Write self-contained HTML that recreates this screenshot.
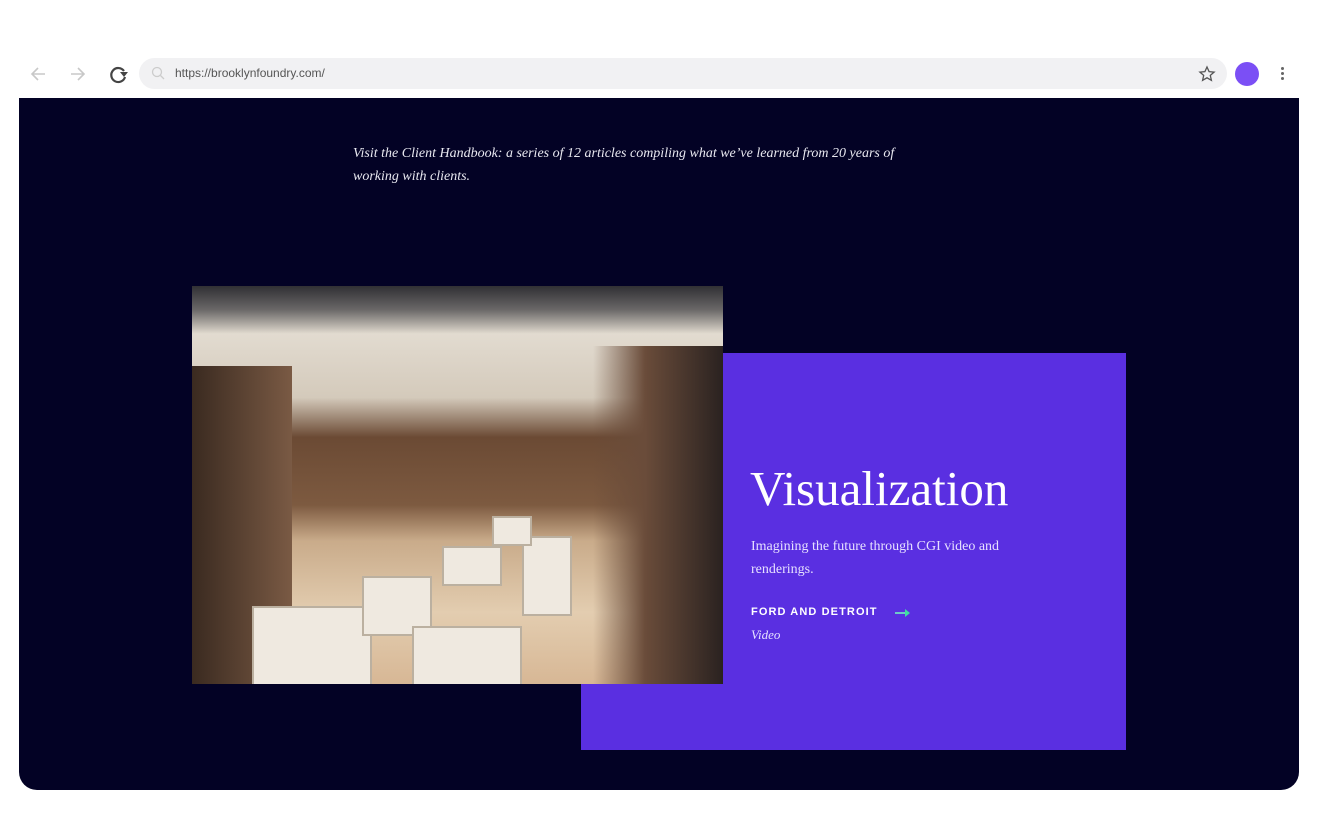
<!DOCTYPE html>
<html><head><meta charset="utf-8"><style>
*{margin:0;padding:0;box-sizing:border-box}
body{width:1319px;height:834px;background:#fff;position:relative;overflow:hidden;font-family:"Liberation Sans",sans-serif}
.bar{position:absolute;top:58px;left:139px;width:1088px;height:31px;border-radius:16px;background:#f1f1f3}
.url{position:absolute;left:175px;top:66px;font-size:12px;color:#555}
.page{position:absolute;left:19px;top:98px;width:1280px;height:692px;background:#030225;border-radius:0 0 18px 18px;overflow:hidden}
.intro{position:absolute;left:334px;top:44px;width:585px;font-family:"Liberation Serif",serif;font-style:italic;font-size:14px;line-height:23px;color:#e8e8f0}
.purple{position:absolute;left:562px;top:255px;width:545px;height:397px;background:#5a2fe1}
.img{position:absolute;left:173px;top:188px;width:531px;height:398px;overflow:hidden;background:#8a6a50}
.img .bg{position:absolute;inset:0;background:
linear-gradient(180deg,rgba(40,40,45,.95) 0,rgba(60,60,65,.7) 6%,transparent 12%),
linear-gradient(180deg,#cfc7ba 0,#e2dbd0 12%,#d4cabb 28%,rgba(160,130,100,0) 38%),
linear-gradient(180deg,#6b4a34 38%,#7d5a40 55%,#c9ab8a 64%,#e3cdb0 82%,#d7b795 100%)}
.img .l{position:absolute;left:0;top:80px;width:100px;height:320px;background:linear-gradient(90deg,#3a2a20,#7a5a44)}
.img .r{position:absolute;right:0;top:60px;width:130px;height:340px;background:linear-gradient(270deg,#2a2220,#6a4c3a 60%,rgba(106,76,58,0))}
.img .d{position:absolute;background:#efe9e0;border:2px solid #bbb0a0}
h2{position:absolute;left:750px;top:460px;font-family:"Liberation Serif",serif;font-weight:400;font-size:49px;color:#fff}
.desc{position:absolute;left:751px;top:535px;width:300px;font-family:"Liberation Serif",serif;font-size:14px;line-height:23px;color:#e6e0ff}
.link{position:absolute;left:751px;top:606px;font-size:11px;font-weight:700;letter-spacing:1.1px;color:#fff}
.arr{position:absolute;left:895px;top:612px;width:13px;height:2px;background:#6ec9c8}
.arr:after{content:"";position:absolute;right:-2px;top:-3px;border-left:5px solid #3fe0a0;border-top:4px solid transparent;border-bottom:4px solid transparent}
.vid{position:absolute;left:751px;top:627px;font-family:"Liberation Serif",serif;font-style:italic;font-size:13px;color:#e6e0ff}
</style></head><body>
<svg style="position:absolute;left:28px;top:64px" width="20" height="20"><path d="M17 10H4M10 4L4 10l6 6" stroke="#c8c8c8" stroke-width="1.6" fill="none"/></svg>
<svg style="position:absolute;left:68px;top:64px" width="20" height="20"><path d="M3 10h13M10 4l6 6-6 6" stroke="#c8c8c8" stroke-width="1.6" fill="none"/></svg>
<svg style="position:absolute;left:108px;top:63px" width="22" height="22"><path d="M16 8A7 7 0 1 0 17 14" stroke="#444" stroke-width="2.2" fill="none"/><path d="M12 9h8l-4 5z" fill="#444"/></svg>
<div class="bar"></div>
<svg style="position:absolute;left:151px;top:66px" width="14" height="14"><circle cx="6" cy="6" r="4.5" stroke="#ccc" stroke-width="1.3" fill="none"/><path d="M9.5 9.5l3.5 3.5" stroke="#ccc" stroke-width="1.3"/></svg>
<div class="url">https://brooklynfoundry.com/</div>
<svg style="position:absolute;left:1198px;top:65px" width="18" height="18"><path d="M9 2l2.1 4.6 5 .5-3.8 3.3 1.1 4.9L9 12.8 4.6 15.3l1.1-4.9L1.9 7.1l5-.5z" stroke="#555" stroke-width="1.3" fill="none"/></svg>
<div style="position:absolute;left:1235px;top:62px;width:24px;height:24px;border-radius:50%;background:#7b4ff5"></div>
<div style="position:absolute;left:1281px;top:67px;width:3px;height:3px;border-radius:50%;background:#666;box-shadow:0 5px 0 #666,0 10px 0 #666"></div>
<div class="page">
<div class="intro">Visit the Client Handbook: a series of 12 articles compiling what we’ve learned from 20 years of working with clients.</div>
<div class="purple"></div>
<div class="img"><div class="bg"></div><div class="l"></div><div class="r"></div>
<div class="d" style="left:60px;top:320px;width:120px;height:80px"></div>
<div class="d" style="left:170px;top:290px;width:70px;height:60px"></div>
<div class="d" style="left:220px;top:340px;width:110px;height:60px"></div>
<div class="d" style="left:250px;top:260px;width:60px;height:40px"></div>
<div class="d" style="left:330px;top:250px;width:50px;height:80px"></div>
<div class="d" style="left:300px;top:230px;width:40px;height:30px"></div>
</div>
</div>
<h2>Visualization</h2>
<div class="desc">Imagining the future through CGI video and renderings.</div>
<div class="link">FORD AND DETROIT</div>
<div class="arr"></div>
<div class="vid">Video</div>
</body></html>
